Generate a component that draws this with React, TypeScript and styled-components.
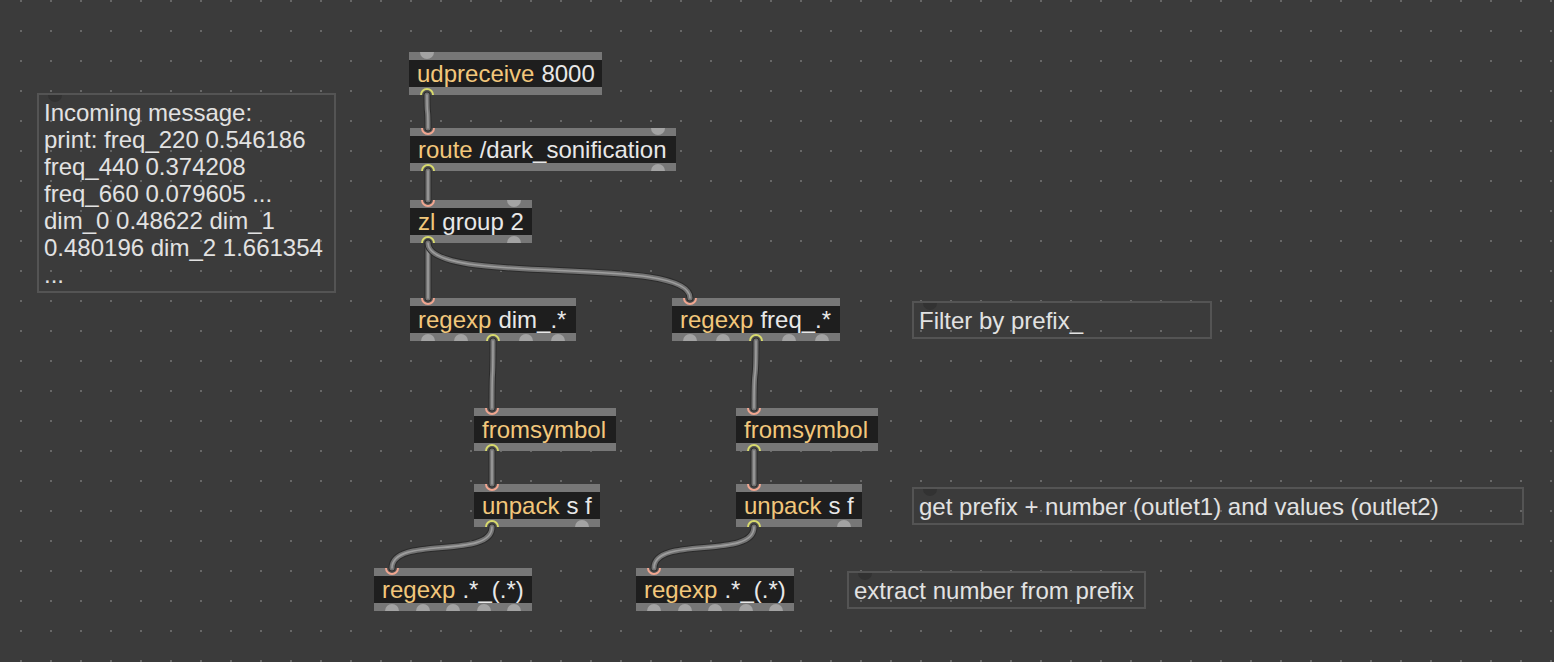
import React from 'react';
import styled, { createGlobalStyle } from 'styled-components';

const GlobalStyle = createGlobalStyle`
  html, body {
    margin: 0;
    padding: 0;
    background: #3b3b3b;
    overflow: hidden;
  }
  body {
    font-family: "Liberation Sans", Arial, sans-serif;
  }
`;

type Obj = {
  id: string;
  x: number;
  y: number;
  w: number;
  cls: string;
  args?: string;
  inlets: number;
  outlets: number;
};

type Note = { x: number; y: number; w: number; text: string };

// [from object, outlet index, to object, inlet index]
type Cable = [string, number, string, number];

const BOX_H = 43;
const PORT_INSET = 18;

const objects: Obj[] = [
  { id: 'udp', x: 409, y: 52, w: 193, cls: 'udpreceive', args: '8000', inlets: 1, outlets: 1 },
  { id: 'route', x: 410, y: 128, w: 266, cls: 'route', args: '/dark_sonification', inlets: 2, outlets: 2 },
  { id: 'zl', x: 410, y: 200, w: 122, cls: 'zl', args: 'group 2', inlets: 2, outlets: 2 },
  { id: 'rdim', x: 410, y: 298, w: 166, cls: 'regexp', args: 'dim_.*', inlets: 1, outlets: 5 },
  { id: 'rfreq', x: 672, y: 298, w: 168, cls: 'regexp', args: 'freq_.*', inlets: 1, outlets: 5 },
  { id: 'fromL', x: 474, y: 408, w: 142, cls: 'fromsymbol', inlets: 1, outlets: 1 },
  { id: 'fromR', x: 736, y: 408, w: 142, cls: 'fromsymbol', inlets: 1, outlets: 1 },
  { id: 'unpL', x: 474, y: 484, w: 126, cls: 'unpack', args: 's f', inlets: 1, outlets: 2 },
  { id: 'unpR', x: 736, y: 484, w: 126, cls: 'unpack', args: 's f', inlets: 1, outlets: 2 },
  { id: 'numL', x: 374, y: 568, w: 158, cls: 'regexp', args: '.*_(.*)', inlets: 1, outlets: 5 },
  { id: 'numR', x: 636, y: 568, w: 158, cls: 'regexp', args: '.*_(.*)', inlets: 1, outlets: 5 },
];

const notes: Note[] = [
  {
    x: 37,
    y: 93,
    w: 299,
    text: 'Incoming message:\nprint: freq_220 0.546186\nfreq_440 0.374208\nfreq_660 0.079605 ...\ndim_0 0.48622 dim_1\n0.480196 dim_2 1.661354\n...',
  },
  { x: 912, y: 301, w: 300, text: 'Filter by prefix_' },
  { x: 912, y: 487, w: 612, text: 'get prefix + number (outlet1) and values (outlet2)' },
  { x: 847, y: 571, w: 299, text: 'extract number from prefix' },
];

const cables: Cable[] = [
  ['udp', 0, 'route', 0],
  ['route', 0, 'zl', 0],
  ['zl', 0, 'rdim', 0],
  ['zl', 0, 'rfreq', 0],
  ['rdim', 2, 'fromL', 0],
  ['rfreq', 2, 'fromR', 0],
  ['fromL', 0, 'unpL', 0],
  ['fromR', 0, 'unpR', 0],
  ['unpL', 0, 'numL', 0],
  ['unpR', 0, 'numR', 0],
];

const byId = (id: string) => objects.find((o) => o.id === id)!;

const portX = (o: Obj, i: number, n: number) =>
  n <= 1 ? o.x + PORT_INSET : o.x + PORT_INSET + (i * (o.w - 2 * PORT_INSET)) / (n - 1);

const cablePath = ([from, out, to, inl]: Cable) => {
  const a = byId(from);
  const b = byId(to);
  const x1 = portX(a, out, a.outlets);
  const y1 = a.y + BOX_H;
  const x2 = portX(b, inl, b.inlets);
  const y2 = b.y;
  const d = (y2 - y1) * 0.8;
  return `M${x1},${y1} C${x1},${y1 + d} ${x2},${y2 - d} ${x2},${y2}`;
};

const isUsed = (id: string, idx: number, side: 'in' | 'out') =>
  cables.some((c) => (side === 'out' ? c[0] === id && c[1] === idx : c[2] === id && c[3] === idx));

export default function App() {
  return (
    <>
      <GlobalStyle />
      <Patcher>
        {notes.map((n, i) => (
          <Comment key={i} $x={n.x} $y={n.y} $w={n.w}>
            <CommentMark />
            {n.text}
          </Comment>
        ))}

        {objects.map((o) => (
          <ObjectBox key={o.id} $x={o.x} $y={o.y} $w={o.w}>
            <PortRow $edge="top">
              {Array.from({ length: o.inlets }).map((_, i) => (
                <Port key={i} $edge="top" $state={isUsed(o.id, i, 'in') ? 'in' : 'idle'} />
              ))}
            </PortRow>
            <Body>
              <ClassName>{o.cls}</ClassName>
              {o.args ? <Args>{o.args}</Args> : null}
            </Body>
            <PortRow $edge="bottom">
              {Array.from({ length: o.outlets }).map((_, i) => (
                <Port key={i} $edge="bottom" $state={isUsed(o.id, i, 'out') ? 'out' : 'idle'} />
              ))}
            </PortRow>
          </ObjectBox>
        ))}

        <Cables width={1554} height={662}>
          {cables.map((c, i) => {
            const d = cablePath(c);
            return (
              <g key={i} fill="none" strokeLinecap="round">
                <path d={d} stroke="#2b2b2b" strokeWidth={7} />
                <path d={d} stroke="#727272" strokeWidth={5} />
                <path d={d} stroke="#9d9d9d" strokeWidth={1.6} />
              </g>
            );
          })}
        </Cables>
      </Patcher>
    </>
  );
}

const Patcher = styled.div`
  position: relative;
  width: 1554px;
  height: 662px;
  overflow: hidden;
  background-color: #3b3b3b;
  background-image: radial-gradient(circle at 1px 1px, #676767 1.1px, transparent 1.4px);
  background-size: 30px 30px;
  background-position: 20px 0;
  font-family: "Liberation Sans", Arial, sans-serif;
`;

const ObjectBox = styled.div<{ $x: number; $y: number; $w: number }>`
  position: absolute;
  left: ${({ $x }) => $x}px;
  top: ${({ $y }) => $y}px;
  width: ${({ $w }) => $w}px;
  height: ${BOX_H}px;
  display: flex;
  flex-direction: column;
  background: #1e1e1e;
`;

const PortRow = styled.div<{ $edge: 'top' | 'bottom' }>`
  height: 8px;
  flex: none;
  display: flex;
  justify-content: space-between;
  align-items: ${({ $edge }) => ($edge === 'top' ? 'flex-start' : 'flex-end')};
  padding: 0 11px;
  background: #777777;
  overflow: hidden;
`;

const portBorder = {
  idle: 'none',
  in: '2px solid #f1a690',
  out: '2px solid #d8da6c',
};

const Port = styled.span<{ $edge: 'top' | 'bottom'; $state: 'idle' | 'in' | 'out' }>`
  flex: none;
  width: 14px;
  height: 14px;
  box-sizing: border-box;
  border-radius: 50%;
  margin-top: ${({ $edge }) => ($edge === 'top' ? '-7px' : '0')};
  margin-bottom: ${({ $edge }) => ($edge === 'bottom' ? '-7px' : '0')};
  background: ${({ $state }) => ($state === 'idle' ? '#a3a3a3' : '#505050')};
  border: ${({ $state }) => portBorder[$state]};
`;

const Body = styled.div`
  flex: 1;
  display: flex;
  align-items: center;
  gap: 7px;
  padding: 0 7px 0 8px;
  font-size: 24px;
  line-height: 27px;
  white-space: nowrap;
  overflow: hidden;
`;

const ClassName = styled.span`
  color: #f2c77b;
`;

const Args = styled.span`
  color: #e8e8e8;
`;

const Comment = styled.div<{ $x: number; $y: number; $w: number }>`
  position: absolute;
  left: ${({ $x }) => $x}px;
  top: ${({ $y }) => $y}px;
  width: ${({ $w }) => $w}px;
  box-sizing: border-box;
  border: 2px solid #545454;
  padding: 4px 6px 3px 5px;
  color: #e2e2e2;
  font-size: 24px;
  line-height: 27px;
  white-space: pre-line;
  overflow: hidden;
`;

const CommentMark = styled.span`
  position: absolute;
  left: 9px;
  top: -7px;
  width: 14px;
  height: 14px;
  border-radius: 50%;
  background: #323232;
`;

const Cables = styled.svg`
  position: absolute;
  left: 0;
  top: 0;
  pointer-events: none;
`;
